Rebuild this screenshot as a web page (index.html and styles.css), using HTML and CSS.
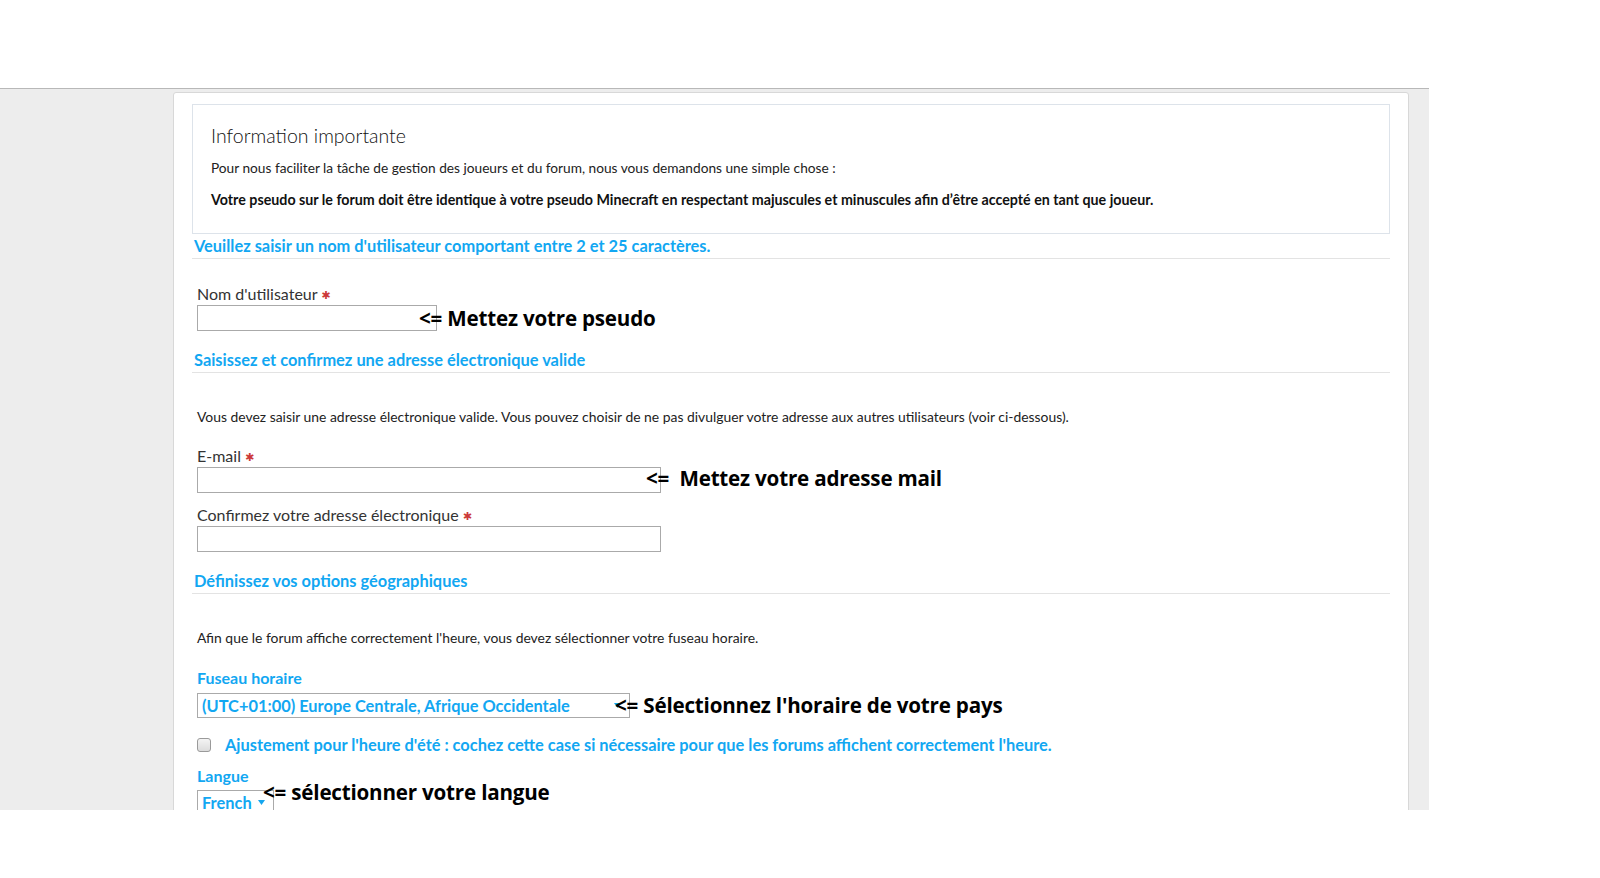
FILE: index.html
```html
<!DOCTYPE html>
<html lang="fr">
<head>
  <meta charset="UTF-8" />
  <meta name="viewport" content="width=device-width, initial-scale=1.0"/>
  <title>Inscription</title>
  <link rel="stylesheet" href="styles.css">
</head>
<body>

  <div class="frame">
    <div class="page">
      <div class="card">

        <div class="info">
          <h2>Information importante</h2>
          <p>Pour nous faciliter la tâche de gestion des joueurs et du forum, nous vous demandons une simple chose :</p>
          <p class="strong">Votre pseudo sur le forum doit être identique à votre pseudo Minecraft en respectant majuscules et minuscules afin d’être accepté en tant que joueur.</p>
        </div>

        <h3 class="section first">Veuillez saisir un nom d'utilisateur comportant entre 2 et 25 caractères.</h3>
        <div class="field gap-26">
          <label>Nom d'utilisateur <span class="req">✱</span></label>
          <div class="row">
            <div class="input w-user"></div>
            <span class="note n-user">&lt;= Mettez votre pseudo</span>
          </div>
        </div>

        <h3 class="section">Saisissez et confirmez une adresse électronique valide</h3>
        <p class="help">Vous devez saisir une adresse électronique valide. Vous pouvez choisir de ne pas divulguer votre adresse aux autres utilisateurs (voir ci-dessous).</p>
        <div class="field gap-21">
          <label>E-mail <span class="req">✱</span></label>
          <div class="row">
            <div class="input w-mail"></div>
            <span class="note n-mail">&lt;=&nbsp; Mettez votre adresse mail</span>
          </div>
        </div>
        <div class="field gap-13">
          <label>Confirmez votre adresse électronique <span class="req">✱</span></label>
          <div class="row">
            <div class="input w-mail"></div>
          </div>
        </div>

        <h3 class="section">Définissez vos options géographiques</h3>
        <p class="help">Afin que le forum affiche correctement l'heure, vous devez sélectionner votre fuseau horaire.</p>
        <div class="field gap-22">
          <label class="blue">Fuseau horaire</label>
          <div class="row">
            <div class="select w-zone">
              <span>(UTC+01:00) Europe Centrale, Afrique Occidentale</span>
              <svg class="arrow" width="7" height="5" viewBox="0 0 7 5"><path d="M0 0h7L3.5 5z" fill="#15a6ef"/></svg>
            </div>
            <span class="note n-zone">&lt;= Sélectionnez l'horaire de votre pays</span>
          </div>
        </div>

        <div class="check-row">
          <span class="checkbox"></span>
          <span class="blue">Ajustement pour l'heure d'été : cochez cette case si nécessaire pour que les forums affichent correctement l'heure.</span>
        </div>

        <div class="field gap-12">
          <label class="blue">Langue</label>
          <div class="row top">
            <div class="select w-lang">
              <span>French</span>
              <svg class="arrow" width="7" height="5" viewBox="0 0 7 5"><path d="M0 0h7L3.5 5z" fill="#15a6ef"/></svg>
            </div>
            <span class="note n-lang">&lt;= sélectionner votre langue</span>
          </div>
        </div>

      </div>
    </div>
  </div>

</body>
</html>
```

FILE: styles.css
```css
* {
  margin: 0;
  padding: 0;
  box-sizing: border-box;
}

body {
  background: #ffffff;
  font-family: 'Lato', 'Open Sans', sans-serif;
  color: #333333;
}

.frame {
  width: 1429px;
  padding-top: 88px;
}

.page {
  height: 722px;
  overflow: hidden;
  background: #ededed;
  border-top: 1px solid #b8b8b8;
  padding-top: 3px;
}

.card {
  margin-left: 173px;
  width: 1236px;
  height: 800px;
  background: #ffffff;
  border: 1px solid #d8d8d8;
  border-radius: 3px;
  padding: 11px 18px 0;
}

/* info box */
.info {
  border: 1px solid #dde3ea;
  height: 130px;
  padding: 20px 18px 0;
}

.info h2 {
  font-size: 19.5px;
  font-weight: 300;
  line-height: 22px;
  color: #111;
}

.info p {
  margin-top: 12px;
  font-size: 13.7px;
  line-height: 18px;
  color: #222;
}

.info p.strong {
  margin-top: 14px;
  font-size: 14.25px;
  font-weight: 700;
  color: #111;
}

/* section headings */
.section {
  margin-top: 19px;
  padding-left: 2px;
  font-size: 16.4px;
  font-weight: 700;
  line-height: 20px;
  padding-bottom: 2px;
  color: #12a7f2;
  border-bottom: 1px solid #e3e3e3;
}

.section.first {
  margin-top: 2px;
}

.help {
  margin-top: 35px;
  padding-left: 5px;
  font-size: 13.9px;
  line-height: 18px;
  color: #222;
}

/* form fields */
.field {
  padding-left: 5px;
}

.gap-26 { margin-top: 26px; }
.gap-22 { margin-top: 22px; }
.gap-21 { margin-top: 21px; }
.gap-13 { margin-top: 13px; }
.gap-12 { margin-top: 12px; }

.field label {
  display: block;
  height: 18px;
  font-size: 16px;
  line-height: 18px;
  margin-bottom: 2px;
  color: #333;
}

.field label.blue {
  font-weight: 700;
  margin-bottom: 5px;
  color: #12a7f2;
}

.blue {
  color: #12a7f2;
  font-weight: 700;
}

.req {
  font-family: 'DejaVu Sans', sans-serif;
  color: #cc3a3a;
  font-size: 11px;
  line-height: 0;
  vertical-align: 1px;
}

.row {
  display: flex;
  align-items: center;
}

.row.top {
  align-items: flex-start;
}

.input,
.select {
  height: 26px;
  border: 1px solid #aaaaaa;
  background: #ffffff;
}

.w-user { width: 240px; }
.w-mail { width: 464px; }
.w-zone { width: 433px; }
.w-lang { width: 77px; }

.select {
  height: 25px;
  display: flex;
  align-items: center;
  justify-content: space-between;
  padding: 0 8px 0 4px;
  font-size: 16.4px;
  font-weight: 700;
  color: #12a7f2;
}

/* annotations drawn over the screenshot */
.note {
  position: relative;
  font-family: 'Open Sans', 'Lato', sans-serif;
  font-size: 20.6px;
  font-weight: 700;
  line-height: 26px;
  color: #000000;
  letter-spacing: -0.2px;
  white-space: pre;
}

.n-user { margin-left: -18px; }
.n-mail { margin-left: -15px; margin-top: -5px; }
.n-zone { margin-left: -15px; }
.n-lang { margin-left: -11px; margin-top: -11px; }

.check-row {
  display: flex;
  align-items: center;
  gap: 14px;
  margin-top: 17px;
  padding-left: 5px;
  font-size: 16.4px;
  line-height: 20px;
}

.checkbox {
  width: 14px;
  height: 14px;
  border: 1px solid #9a9a9a;
  border-radius: 3px;
  background: linear-gradient(#f4f4f4, #dcdcdc);
}
```
